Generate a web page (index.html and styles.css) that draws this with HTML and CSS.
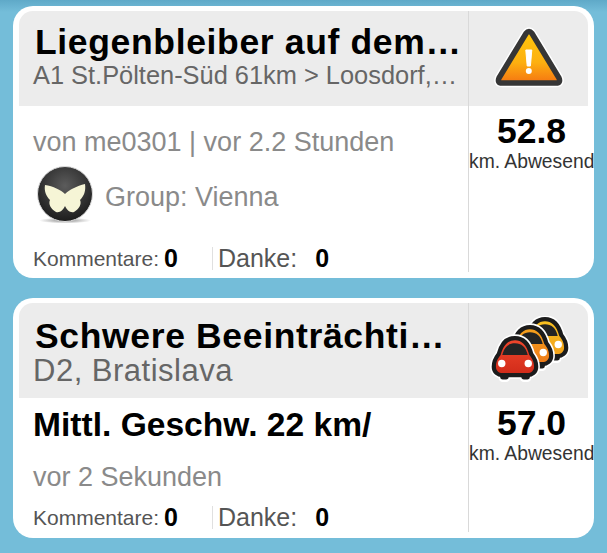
FILE: index.html
```html
<!DOCTYPE html>
<html>
	<head>
		<title>Waze Alerts</title>
		<link rel="stylesheet" href="styles.css">
	</head>
	<body>
		<div class="card card-first">
			<div class="main">
				<div class="head">
					<h1 class="title">Liegenbleiber auf dem…</h1>
					<p class="sub">A1 St.Pölten-Süd 61km &gt; Loosdorf,…</p>
				</div>
				<div class="body body-first">
					<p class="by">von me0301 | vor 2.2 Stunden</p>
					<div class="group">
						<svg class="moth" width="62" height="62" viewBox="0 0 62 62">
							<defs>
								<radialGradient id="ball" cx="50%" cy="35%" r="65%">
									<stop offset="0" stop-color="#5c5c5c"/>
									<stop offset="1" stop-color="#1c1c1c"/>
								</radialGradient>
								<radialGradient id="shade" cx="50%" cy="50%" r="50%">
									<stop offset="0" stop-color="#555" stop-opacity=".7"/>
									<stop offset="1" stop-color="#555" stop-opacity="0"/>
								</radialGradient>
							</defs>
							<ellipse cx="31" cy="55.500" rx="26" ry="3" fill="url(#shade)"/>
							<circle cx="31" cy="29" r="27.500" fill="url(#ball)" stroke="#ddd" stroke-width="1"/>
							<path d="M31 29 C27 25 19 21 11 20 C10 26 12 31 16 35 C14 39 17 44 22 47 C26 48 29 45 31 41 C33 45 36 48 40 47 C45 44 48 39 46 35 C50 31 52 26 51 19 C43 21 35 25 31 29Z" fill="#f6f5d6"/>
						</svg>
						<span class="group-name">Group: Vienna</span>
					</div>
				</div>
				<div class="stats">
					<span class="stat-label stat-comments">Kommentare:</span><b class="count">0</b>
					<span class="stat-label stat-thanks">Danke:</span><b class="count count-thanks">0</b>
				</div>
			</div>
			<div class="side">
				<div class="icon-box">
					<svg width="74" height="66" viewBox="0 0 74 66">
						<defs>
							<linearGradient id="warn" x1="0" y1="0" x2="0" y2="1">
								<stop offset="0" stop-color="#ffc70c"/>
								<stop offset=".6" stop-color="#fdb010"/>
								<stop offset="1" stop-color="#f57512"/>
							</linearGradient>
						</defs>
						<path d="M34 7.500 Q37 3.500 40 7.500 L67 52 Q69 57 64 57 L10 57 Q5 57 7 52 Z" fill="none" stroke="#fff" stroke-width="8.500" stroke-linejoin="round"/>
						<path d="M34 7.500 Q37 3.500 40 7.500 L67 52 Q69 57 64 57 L10 57 Q5 57 7 52 Z" fill="url(#warn)" stroke="#363636" stroke-width="5.500" stroke-linejoin="round"/>
						<path d="M33.800 24 H39.800 L38.400 40 H35.200 Z" fill="#fff" stroke="#fff" stroke-linejoin="round"/>
						<circle cx="36.800" cy="45" r="3" fill="#fff"/>
					</svg>
				</div>
				<div class="dist">52.8</div>
				<div class="away">km. Abwesend</div>
			</div>
		</div>

		<div class="card">
			<div class="main">
				<div class="head head-second">
					<h1 class="title">Schwere Beeinträchti…</h1>
					<p class="sub sub-big">D2, Bratislava</p>
				</div>
				<div class="body body-second">
					<p class="speed">Mittl. Geschw. 22 km/</p>
					<p class="by by-second">vor 2 Sekunden</p>
				</div>
				<div class="stats">
					<span class="stat-label stat-comments">Kommentare:</span><b class="count">0</b>
					<span class="stat-label stat-thanks">Danke:</span><b class="count count-thanks">0</b>
				</div>
			</div>
			<div class="side">
				<div class="icon-box">
					<svg width="90" height="70" viewBox="0 0 90 70">
						<defs>
							<linearGradient id="carYellow" x1="0" y1="0" x2="0" y2="1">
								<stop offset="0" stop-color="#f9c020"/>
								<stop offset="1" stop-color="#f2a21a"/>
							</linearGradient>
							<linearGradient id="carOrange" x1="0" y1="0" x2="0" y2="1">
								<stop offset="0" stop-color="#f5a01c"/>
								<stop offset="1" stop-color="#ee7c18"/>
							</linearGradient>
							<linearGradient id="carRed" x1="0" y1="0" x2="0" y2="1">
								<stop offset="0" stop-color="#f0462c"/>
								<stop offset="1" stop-color="#d22c1a"/>
							</linearGradient>
							<path id="shell" d="M-18 3 C-18 -3 -15 -6 -13.500 -8 C-11 -18 -6 -22 0 -22 C6 -22 11 -18 13.500 -8 C15 -6 18 -3 18 3 C18 7 15 9 12 9 H-12 C-15 9 -18 7 -18 3Z"/>
							<g id="halo">
								<use href="#shell" fill="none" stroke="#fff" stroke-width="11" stroke-linejoin="round"/>
								<rect x="-14" y="8" width="8" height="8" rx="2.500" fill="#fff" stroke="#fff" stroke-width="3"/>
								<rect x="6" y="8" width="8" height="8" rx="2.500" fill="#fff" stroke="#fff" stroke-width="3"/>
								<use href="#shell" fill="none" stroke="#1c1c1c" stroke-width="8" stroke-linejoin="round"/>
								<rect x="-14" y="8" width="8" height="7" rx="2.500" fill="#1c1c1c"/>
								<rect x="6" y="8" width="8" height="7" rx="2.500" fill="#1c1c1c"/>
							</g>
							<g id="parts">
								<path d="M-12 -8 C-10 -16 -6 -19 0 -19 C6 -19 10 -16 12 -8 Z" fill="#242424"/>
								<circle cx="-12.500" cy="0" r="3.500" fill="#fff"/>
								<circle cx="12.500" cy="0" r="3.500" fill="#fff"/>
							</g>
						</defs>
						<g transform="translate(61 28.500) scale(1.06)">
							<use href="#halo"/><use href="#shell" fill="url(#carYellow)"/><use href="#parts"/>
						</g>
						<g transform="translate(46 36.500) scale(1.06)">
							<use href="#halo"/><use href="#shell" fill="url(#carOrange)"/><use href="#parts"/>
						</g>
						<g transform="translate(31 47.500) scale(1.06)">
							<use href="#halo"/><use href="#shell" fill="url(#carRed)"/><use href="#parts"/>
						</g>
					</svg>
				</div>
				<div class="dist">57.0</div>
				<div class="away">km. Abwesend</div>
			</div>
		</div>
	</body>
</html>
```

FILE: styles.css
```css
html, body { margin:0; padding:0; }
body {
	width:607px;
	height:553px;
	overflow:hidden;
	background:#74bdd9 linear-gradient(#5fa9c8, #74bdd9 12px) no-repeat;
	font-family:"Liberation Sans", Arial, sans-serif;
	padding-top:6px;
	box-sizing:border-box;
}
p, h1 { margin:0; font-weight:normal; }

.card {
	display:flex;
	width:581px;
	height:240px;
	margin-left:13px;
	padding:5px 6px 6px;
	box-sizing:border-box;
	background:#fff;
	border-radius:20px;
}
.card-first { height:272px; margin-bottom:20px; }

.main { flex:1; display:flex; flex-direction:column; min-width:0; }
.head {
	height:95px;
	background:#ececec;
	padding:13px 0 0 14px;
	box-sizing:border-box;
	border-top-left-radius:14px;
}
.head-second { padding-top:15px; }
.title { font-size:35.500px; line-height:36px; font-weight:bold; letter-spacing:.65px; color:#000; padding-left:2px; white-space:nowrap; }
.sub { font-size:25.400px; line-height:30px; color:#666; white-space:nowrap; }
.sub-big { font-size:31px; line-height:34px; letter-spacing:.5px; }

.body { flex:1; padding-left:14px; }
.body-first { padding-top:20px; }
.body-second { padding-top:9px; }
.by { font-size:27px; line-height:32px; color:#8a8a8a; }
.by-second { margin-top:18px; }
.speed { font-size:33.600px; line-height:36px; font-weight:bold; color:#000; }

.group { display:flex; align-items:center; gap:9px; margin-top:7px; margin-left:1px; font-size:27px; color:#8a8a8a; }
.group-name { padding-top:3px; }

.stats { display:flex; align-items:center; height:31px; padding-left:14px; margin-bottom:-1px; }
.card-first .stats { margin-bottom:-2px; }
.stat-label { font-size:21px; color:#555; }
.count { font-size:25px; font-weight:bold; color:#000; margin-left:5px; }
.stat-thanks { border-left:1px solid #e0e0e0; margin-left:34px; padding-left:5px; font-size:25px; line-height:23px; }
.count-thanks { margin-left:18px; }

.side { width:119px; flex:none; border-left:1px solid #d9d9d9; text-align:center; }
.icon-box { display:flex; align-items:center; justify-content:center; height:95px; background:#ececec; border-top-right-radius:14px; }
.dist { font-size:35.500px; line-height:38px; font-weight:bold; color:#000; margin:6px 0 2px; padding-left:6px; }
.away { font-size:19.300px; line-height:20px; color:#333; white-space:nowrap; margin-right:-6px; }
```
